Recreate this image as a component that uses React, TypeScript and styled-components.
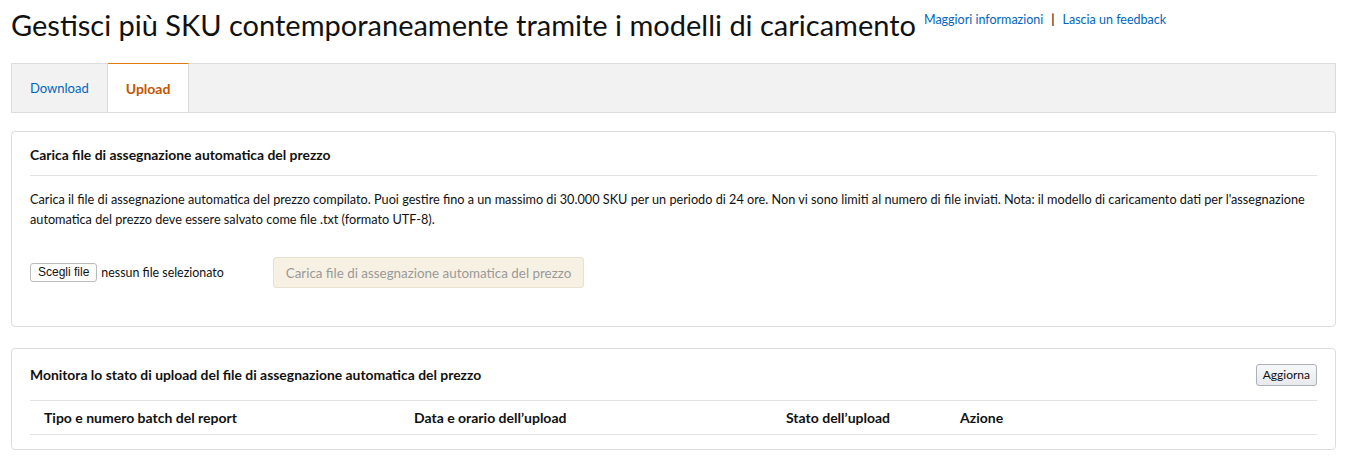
import React from "react";
import styled, { createGlobalStyle } from "styled-components";

const GlobalStyle = createGlobalStyle`
  body {
    margin: 0;
    background: #fff;
    font-family: "Lato", "Open Sans", Arial, sans-serif;
    color: #111;
  }
`;

const App = () => {
  return (
    <>
      <GlobalStyle />
      <Page>
        <TitleRow>
          <Title>Gestisci più SKU contemporaneamente tramite i modelli di caricamento</Title>
          <TopLinks>
            <Link href="#">Maggiori informazioni</Link>
            <Sep>|</Sep>
            <Link href="#">Lascia un feedback</Link>
          </TopLinks>
        </TitleRow>

        <Tabs>
          <Tab>Download</Tab>
          <Tab active>Upload</Tab>
        </Tabs>

        <Card>
          <CardHeader>
            <CardTitle>Carica file di assegnazione automatica del prezzo</CardTitle>
          </CardHeader>
          <Text>
            Carica il file di assegnazione automatica del prezzo compilato. Puoi gestire fino a un massimo di 30.000 SKU
            per un periodo di 24 ore. Non vi sono limiti al numero di file inviati. Nota: il modello di caricamento dati
            per l'assegnazione automatica del prezzo deve essere salvato come file .txt (formato UTF-8).
          </Text>
          <UploadRow>
            <FilePicker>
              <FileButton>Scegli file</FileButton>
              <FileName>nessun file selezionato</FileName>
            </FilePicker>
            <UploadButton disabled>Carica file di assegnazione automatica del prezzo</UploadButton>
          </UploadRow>
        </Card>

        <Card compact>
          <CardHeader tall>
            <CardTitle>Monitora lo stato di upload del file di assegnazione automatica del prezzo</CardTitle>
            <SmallButton>Aggiorna</SmallButton>
          </CardHeader>
          <TableHead>
            <Th>Tipo e numero batch del report</Th>
            <Th>Data e orario dell’upload</Th>
            <Th>Stato dell’upload</Th>
            <Th>Azione</Th>
          </TableHead>
        </Card>
      </Page>
    </>
  );
};

export default App;

const Page = styled.div`
  padding: 0 14px 0 11px;
`;

const TitleRow = styled.div`
  display: flex;
  align-items: flex-start;
  height: 63px;
`;

const Title = styled.h1`
  margin: 6px 0 0;
  font-size: 29px;
  font-weight: 400;
  line-height: 38px;
  color: #111;
`;

const TopLinks = styled.div`
  display: flex;
  align-items: center;
  gap: 8px;
  margin: 12px 0 0 8px;
  font-size: 12.5px;
`;

const Link = styled.a`
  color: #0066c0;
  text-decoration: none;
`;

const Sep = styled.span`
  color: #3a3a3a;
  font-weight: 700;
`;

const Tabs = styled.div`
  display: flex;
  height: 48px;
  background: #f2f2f2;
  border: 1px solid #dcdcdc;
`;

const Tab = styled.div<{ active?: boolean }>`
  display: flex;
  align-items: center;
  box-sizing: border-box;
  height: 49px;
  margin: -1px 0 -1px;
  padding: 0 18px ${(p) => (p.active ? "0" : "1px")};
  font-size: ${(p) => (p.active ? "14px" : "13px")};
  font-weight: ${(p) => (p.active ? 700 : 400)};
  color: ${(p) => (p.active ? "#c45500" : "#0066c0")};
  background: ${(p) => (p.active ? "#fff" : "transparent")};
  border-right: 1px solid #dcdcdc;
  border-top: 1px solid ${(p) => (p.active ? "#e47911" : "transparent")};
`;

const Card = styled.div<{ compact?: boolean }>`
  border: 1px solid #dcdcdc;
  border-radius: 4px;
  padding: 0 18px ${(p) => (p.compact ? "14px" : "38px")};
  margin-top: ${(p) => (p.compact ? "21px" : "18px")};
`;

const CardHeader = styled.div<{ tall?: boolean }>`
  display: flex;
  align-items: center;
  justify-content: space-between;
  box-sizing: border-box;
  height: ${(p) => (p.tall ? "52px" : "44px")};
  padding-top: ${(p) => (p.tall ? "0" : "1px")};
  border-bottom: 1px solid #e3e3e3;
`;

const CardTitle = styled.div`
  font-size: 13.9px;
  font-weight: 700;
  color: #111;
`;

const Text = styled.p`
  margin: 13px 0 0;
  font-size: 12.7px;
  line-height: 20px;
  color: #111;
`;

const UploadRow = styled.div`
  display: flex;
  align-items: center;
  gap: 49px;
  margin-top: 28px;
`;

const FilePicker = styled.div`
  display: flex;
  align-items: center;
  gap: 4px;
`;

const FileButton = styled.button`
  font-family: "Liberation Sans", Arial, sans-serif;
  font-size: 12px;
  padding: 2px 7px;
  height: 19px;
  line-height: 13px;
  background: #fff;
  border: 1px solid #bbb;
  border-radius: 3px;
  color: #111;
`;

const FileName = styled.span`
  font-size: 12.4px;
  color: #111;
`;

const UploadButton = styled.button`
  font-family: inherit;
  height: 31px;
  padding: 0 12px;
  font-size: 13.4px;
  color: #999;
  background: #f7f1e4;
  border: 1px solid #e9e0cd;
  border-radius: 3px;
`;

const SmallButton = styled.button`
  font-family: inherit;
  font-size: 12px;
  height: 22px;
  padding: 0 6px;
  color: #111;
  background: linear-gradient(#f7f8fa, #e7e9ec);
  border: 1px solid #adb1b8;
  border-radius: 3px;
`;

const TableHead = styled.div`
  display: grid;
  grid-template-columns: 370px 372px 174px 1fr;
  height: 33px;
  align-items: center;
  border-bottom: 1px solid #e3e3e3;
`;

const Th = styled.div`
  padding-left: 14px;
  font-size: 14px;
  font-weight: 700;
  color: #111;
`;
